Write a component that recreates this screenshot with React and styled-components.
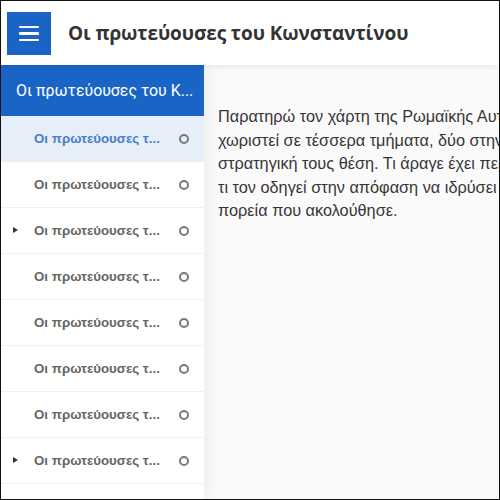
import React from "react";
import styled, { createGlobalStyle } from "styled-components";

const Global = createGlobalStyle`
  html, body { margin: 0; padding: 0; }
  body { width: 500px; height: 500px; overflow: hidden; background: #fff; }
  * { box-sizing: border-box; }
`;

const Frame = styled.div`
  width: 500px;
  height: 500px;
  border: 1px solid #111;
  display: flex;
  flex-direction: column;
  overflow: hidden;
  background: #fafafa;
`;

const Header = styled.header`
  height: 64px;
  flex: none;
  display: flex;
  align-items: center;
  gap: 17px;
  padding-left: 6px;
  background: #fff;
  position: relative;
  z-index: 2;
  box-shadow: 0 2px 6px rgba(0, 0, 0, 0.08);
`;

const MenuButton = styled.button`
  width: 44px;
  height: 43px;
  margin-top: 1px;
  border: none;
  padding: 0;
  background: #1a64c6;
  display: flex;
  flex-direction: column;
  align-items: center;
  justify-content: center;
  gap: 4px;
`;

const MenuLine = styled.span`
  width: 20px;
  height: 2.5px;
  background: #fff;
  border-radius: 1px;
`;

const Title = styled.h1`
  margin: 0;
  font-family: "Open Sans", "Liberation Sans", sans-serif;
  font-weight: 700;
  font-size: 19px;
  color: #333;
  letter-spacing: -0.1px;
`;

const Body = styled.div`
  flex: 1;
  display: flex;
  min-height: 0;
`;

const Sidebar = styled.nav`
  width: 203px;
  flex: none;
  background: #fff;
  position: relative;
  z-index: 1;
  box-shadow: 2px 0 14px rgba(0, 0, 0, 0.07);
  display: flex;
  flex-direction: column;
`;

const SideHead = styled.div`
  height: 51px;
  flex: none;
  background: #1a64c6;
  color: #fff;
  display: flex;
  align-items: center;
  padding-left: 15px;
  font-family: "Roboto", "Liberation Sans", sans-serif;
  font-size: 15.9px;
  white-space: nowrap;
`;

const Item = styled.div`
  height: 46px;
  flex: none;
  display: flex;
  align-items: center;
  position: relative;
  padding-left: 33px;
  padding-right: 15px;
  background: ${(p) => (p.$active ? "#e6eef9" : "#fff")};
  border-bottom: 1px solid #efefef;
  font-family: "Liberation Sans", Arial, sans-serif;
  font-weight: 700;
  font-size: 13.3px;
  color: ${(p) => (p.$active ? "#4a7fca" : "#666")};
`;

const Caret = styled.span`
  position: absolute;
  left: 12px;
  top: 50%;
  margin-top: -3.5px;
  width: 0;
  height: 0;
  border-top: 3.5px solid transparent;
  border-bottom: 3.5px solid transparent;
  border-left: 5px solid #333;
`;

const Label = styled.span`
  flex: 1;
  white-space: nowrap;
`;

const Dot = styled.span`
  width: 10px;
  height: 10px;
  border: 2px solid #7a7a7a;
  border-radius: 50%;
  flex: none;
`;

const Main = styled.main`
  flex: 1;
  overflow: hidden;
  padding: 40px 0 0 14px;
  font-family: "Liberation Sans", Arial, sans-serif;
  font-size: 16.3px;
  line-height: 23.5px;
  color: #363636;
`;

const Line = styled.div`
  white-space: nowrap;
`;

const lines = [
  "Παρατηρώ τον χάρτη της Ρωμαϊκής Αυτοκρατορίας που έχει",
  "χωριστεί σε τέσσερα τμήματα, δύο στην Ανατολή και δύο στη Δύση",
  "στρατηγική τους θέση. Τι άραγε έχει περάσει από το μυαλό του",
  "τι τον οδηγεί στην απόφαση να ιδρύσει μια νέα πρωτεύουσα και",
  "πορεία που ακολούθησε.",
];

const items = [
  { active: true },
  {},
  { caret: true },
  {},
  {},
  {},
  {},
  { caret: true },
  {},
];

export default function App() {
  return (
    <>
      <Global />
      <Frame>
        <Header>
          <MenuButton aria-label="menu">
            <MenuLine />
            <MenuLine />
            <MenuLine />
          </MenuButton>
          <Title>Οι πρωτεύουσες του Κωνσταντίνου</Title>
        </Header>
        <Body>
          <Sidebar>
            <SideHead>Οι πρωτεύουσες του Κ...</SideHead>
            {items.map((it, i) => (
              <Item key={i} $active={it.active}>
                {it.caret && <Caret />}
                <Label>Οι πρωτεύουσες τ...</Label>
                <Dot />
              </Item>
            ))}
          </Sidebar>
          <Main>
            {lines.map((l, i) => (
              <Line key={i}>{l}</Line>
            ))}
          </Main>
        </Body>
      </Frame>
    </>
  );
}
